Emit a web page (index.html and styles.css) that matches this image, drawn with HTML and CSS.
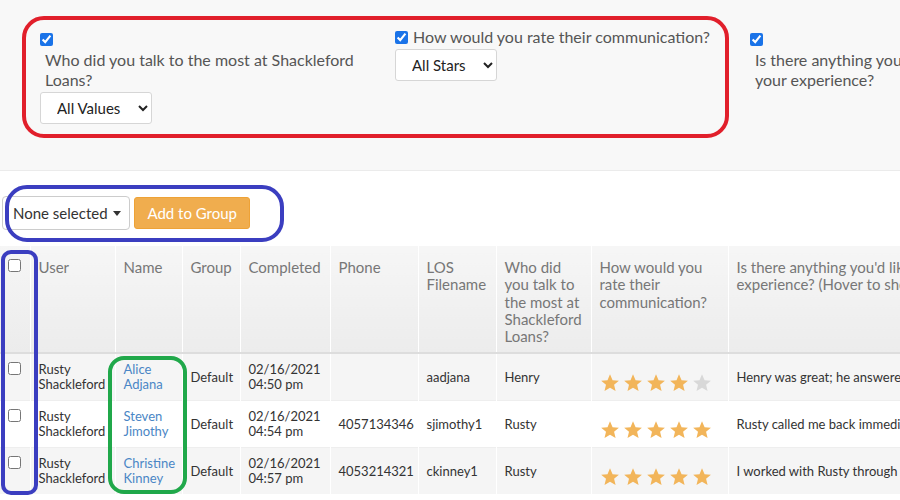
FILE: index.html
```html
<html>

<head>
    <title>survey responses</title>

    <link rel="stylesheet" href="styles.css">

</head>

<body>

    <div class="filters">
        <div class="filter stacked">
            <input type="checkbox" checked>
            <div class="filter-label">Who did you talk to the most at Shackleford Loans?</div>
            <select class="filter-select">
                <option>All Values</option>
            </select>
        </div>
        <div class="filter">
            <input type="checkbox" checked><span class="filter-label">How would you rate their communication?</span>
            <select class="filter-select">
                <option>All Stars</option>
            </select>
        </div>
        <div class="filter stacked">
            <input type="checkbox" checked>
            <div class="filter-label">Is there anything you'd like to add about your experience?</div>
        </div>
    </div>

    <div class="toolbar">
        <button class="dropdown">None selected <span class="caret"></span></button>
        <button class="btn-warning">Add to Group</button>
    </div>

    <table class="responses">
        <colgroup>
            <col style="width: 30px">
            <col style="width: 85px">
            <col style="width: 67px">
            <col style="width: 58px">
            <col style="width: 90px">
            <col style="width: 88px">
            <col style="width: 78px">
            <col style="width: 95px">
            <col style="width: 137px">
            <col style="width: 330px">
        </colgroup>
        <thead>
            <tr>
                <th class="check"><input type="checkbox"></th>
                <th>User</th>
                <th>Name</th>
                <th>Group</th>
                <th>Completed</th>
                <th>Phone</th>
                <th>LOS Filename</th>
                <th>Who did you talk to the most at Shackleford Loans?</th>
                <th>How would you rate their communication?</th>
                <th>Is there anything you'd like to add about your experience? (Hover to show full text)</th>
            </tr>
        </thead>
        <tbody id="rows"></tbody>
    </table>

    <!-- annotations drawn over the screenshot -->
    <div class="mark mark-red"></div>
    <div class="mark mark-blue-bar"></div>
    <div class="mark mark-blue-col"></div>
    <div class="mark mark-green"></div>

    <script>

        var respostas = [
            ['Alice Adjana', '02/16/2021 04:50 pm', '', 'aadjana', 'Henry', 4, 'Henry was great; he answered all of my questions quickly and clearly.'],
            ['Steven Jimothy', '02/16/2021 04:54 pm', '4057134346', 'sjimothy1', 'Rusty', 5, 'Rusty called me back immediately every time I had a question about the loan.'],
            ['Christine Kinney', '02/16/2021 04:57 pm', '4053214321', 'ckinney1', 'Rusty', 5, 'I worked with Rusty through the whole process and it could not have been easier.']
        ];

        var estrela = '<svg class="star" viewBox="0 0 24 24"><path d="M12 1.5l3.1 7.1 7.6.6-5.8 5 1.8 7.5L12 17.7l-6.6 4 1.8-7.5-5.8-5 7.6-.6z"/></svg>';

        function desenharEstrelas(n) {
            var html = '';
            for (var i = 0; i < 5; i++) {
                html += i < n ? estrela : estrela.replace('class="star"', 'class="star off"');
            }
            return html;
        }

        var corpo = document.getElementById('rows');

        respostas.forEach(function (r) {
            var nome = r[0].split(' ');
            var data = r[1].split(' ');
            corpo.innerHTML += '<tr>' +
                '<td class="check"><input type="checkbox"></td>' +
                '<td>Rusty<br>Shackleford</td>' +
                '<td><a href="#">' + nome[0] + '<br>' + nome[1] + '</a></td>' +
                '<td>Default</td>' +
                '<td>' + data[0] + '<br>' + data[1] + ' ' + data[2] + '</td>' +
                '<td>' + r[2] + '</td>' +
                '<td>' + r[3] + '</td>' +
                '<td>' + r[4] + '</td>' +
                '<td class="stars">' + desenharEstrelas(r[5]) + '</td>' +
                '<td class="answer">' + r[6] + '</td>' +
                '</tr>';
        });

    </script>

</body>

</html>
```

FILE: styles.css
```css
body {
    margin: 0;
    font-family: Lato, "Open Sans", sans-serif;
    color: #333;
    background: #fff;
    overflow: hidden;
    position: relative;
}

.filters {
    display: flex;
    height: 171px;
    box-sizing: border-box;
    padding: 27px 0 0 40px;
    background: #f8f8f8;
    border-bottom: 1px solid #ebebeb;
    color: #555;
    font-size: 16px;
    line-height: 20px;
}

.filter {
    flex: none;
    width: 355px;
}

.filter input {
    margin: 0;
    width: 13px;
    height: 13px;
    vertical-align: -1px;
    accent-color: #1a73e8;
}

.filter-label {
    display: inline-block;
    padding-left: 5px;
}

.stacked input {
    display: block;
    margin-top: 6px;
}

.stacked .filter-label {
    display: block;
    max-width: 313px;
    margin-top: 4px;
}

.filter-select {
    display: block;
    margin-top: 2px;
    height: 32px;
    padding: 0 14px 0 12px;
    font-family: inherit;
    font-size: 15px;
    color: #222;
    background: #fff;
    border: 1px solid #d6d6d6;
    border-radius: 3px;
}

.toolbar {
    display: flex;
    gap: 4px;
    align-items: center;
    margin: 25px 0 16px 2px;
    height: 34px;
}

.dropdown {
    height: 34px;
    white-space: nowrap;
    text-align: left;
    padding: 0 8px 0 10px;
    font-family: inherit;
    font-size: 15px;
    color: #333;
    background: #fff;
    border: 1px solid #ccc;
    border-radius: 4px;
}

.caret {
    display: inline-block;
    margin-left: 2px;
    vertical-align: 3px;
    border-top: 5px solid #333;
    border-left: 4px solid transparent;
    border-right: 4px solid transparent;
}

.btn-warning {
    height: 32px;
    padding: 0 12px;
    font-family: inherit;
    font-size: 15px;
    color: #fff;
    background: #f0ad4e;
    border: 1px solid #eea236;
    border-radius: 3px;
}

.responses {
    table-layout: fixed;
    border-collapse: collapse;
    width: 1058px;
    font-size: 13px;
    line-height: 15px;
}

.responses th {
    text-align: left;
    vertical-align: top;
    font-weight: normal;
    font-size: 15px;
    line-height: 17.3px;
    color: #777;
    padding: 13px 8px 7px;
    background-image: linear-gradient(#f6f6f6, #ececec);
    border-left: 1px solid #fff;
    border-bottom: 2px solid #ddd;
    height: 87px;
}

.responses td {
    padding: 8px;
    vertical-align: middle;
    border-left: 1px solid #fff;
    border-top: 1px solid #eee;
    height: 30px;
}

.responses th:first-child,
.responses td:first-child {
    border-left: 0;
}

.responses tbody tr:nth-child(odd) {
    background: #f5f5f5;
}

.responses .check {
    vertical-align: top;
    padding: 8px;
}

.check input {
    margin: 0;
    width: 13px;
    height: 13px;
}

.responses th.check {
    padding-top: 10px;
}

th.check input {
    margin-top: 3px;
}

.responses a {
    color: #4a86c5;
    text-decoration: none;
}

.stars {
    padding-top: 14px !important;
    padding-bottom: 2px !important;
}

.star {
    width: 20px;
    height: 20px;
    margin-right: 3px;
    fill: #f2b55a;
}

.star.off {
    fill: #d8d8d8;
}

.answer {
    white-space: nowrap;
    overflow: hidden;
}

.mark {
    position: absolute;
    box-sizing: border-box;
    border: 4px solid;
}

.mark-red {
    left: 22px;
    top: 16px;
    width: 707px;
    height: 122px;
    border-color: #e11f2b;
    border-radius: 22px;
}

.mark-blue-bar {
    left: 5px;
    top: 185px;
    width: 279px;
    height: 57px;
    border-color: #3b3ec0;
    border-radius: 22px;
}

.mark-blue-col {
    left: 1px;
    top: 250px;
    width: 37px;
    height: 245px;
    border-color: #3b3ec0;
    border-radius: 10px;
}

.mark-green {
    left: 108px;
    top: 356px;
    width: 79px;
    height: 138px;
    border-color: #20a84a;
    border-radius: 16px;
}
```
